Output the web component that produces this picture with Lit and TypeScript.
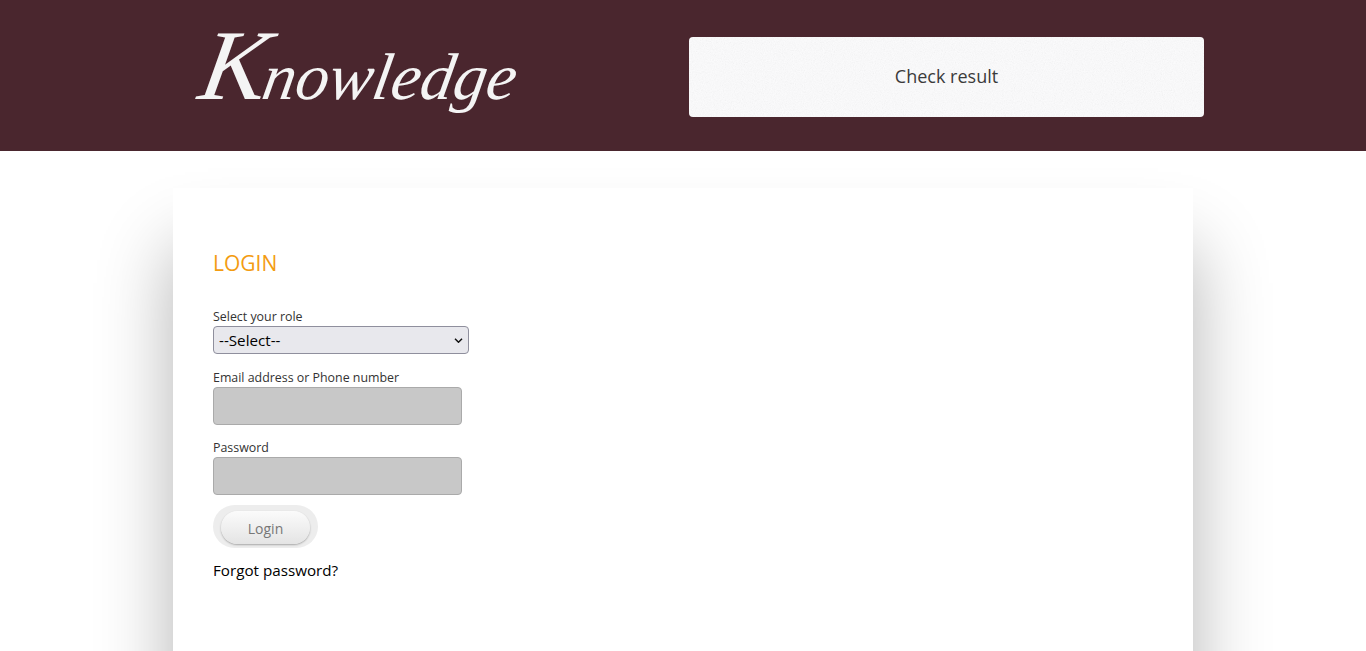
import { LitElement, html, css } from "lit";
import { customElement } from "lit/decorators.js";

@customElement("app-root")
export class AppRoot extends LitElement {
  static styles = css`
    :host { display: block; height: 100vh; overflow: hidden; background: #fff; font-family: "Open Sans", "Noto Sans", sans-serif; color: #333; }
    * { box-sizing: border-box; }
    .top { height: 151px; background: #4a262e; display: flex; justify-content: center; }
    .top-in { width: 1020px; display: flex; align-items: flex-start; }
    .logo { flex: none; width: 516px; height: 124px; padding: 8px 0 0 17px; color: #f4f4f4; font-family: "Liberation Serif", serif; font-style: italic; font-size: 66px; line-height: 116px; white-space: nowrap; }
    .logo-in { display: inline-block; transform: skewX(-10deg); transform-origin: 0 100%; }
    .logo .cap { font-size: 100px; line-height: 116px; margin-right: -3px; }
    .check { flex: none; position: relative; overflow: hidden; width: 515px; height: 80px; margin-top: 37px; background: #fcfcfd; border-radius: 4px; display: flex; align-items: center; justify-content: center; font-size: 18px; color: #3b3b3b; padding-bottom: 3px; }
    .noise { position: absolute; inset: 0; width: 100%; height: 100%; opacity: .13; }
    .check span { position: relative; }
    .card { width: 1020px; height: 600px; margin: 37px auto 0; background: #fff; box-shadow: 0 60px 70px rgba(0,0,0,.3); padding: 59px 40px 0; display: flex; flex-direction: column; align-items: flex-start; }
    h1 { margin: 0 0 28px; font-size: 21px; line-height: 33px; font-weight: 400; color: #f39c12; }
    label { display: block; font-size: 12.4px; line-height: 18px; color: #333; }
    .group { margin-bottom: 14px; }
    .group.role { margin-bottom: 15px; }
    .group.last { margin-bottom: 10px; }
    .sel { position: relative; width: 256px; height: 28px; }
    select { display: block; appearance: none; width: 100%; height: 100%; font: 15.2px "Open Sans", sans-serif; color: #000; background-color: #e8e8ed; border: 1px solid #8f8f9d; border-radius: 4px; padding: 0 5px; }
    .chev { position: absolute; right: 6px; top: 12px; width: 9px; height: 5px; pointer-events: none; }
    input { display: block; width: 249px; height: 38px; background: #c8c8c8; border: 1px solid #aaa; border-radius: 4px; }
    .btn-wrap { padding: 6px 8px 4px; height: 43px; width: 105px; background: #ededed; border-radius: 22px; }
    button { display: block; width: 89px; height: 33px; padding: 1px 0 0; border: 0; border-radius: 17px; background: linear-gradient(#fbfbfb, #e4e4e4); box-shadow: 0 1px 2px rgba(0,0,0,.3); font: 14px "Open Sans", sans-serif; color: #777; }
    a { margin-top: 12px; font-size: 15.2px; line-height: 20px; color: #000; text-decoration: none; }
  `;

  render() {
    return html`
      <header class="top">
        <div class="top-in">
          <div class="logo"><span class="logo-in"><span class="cap">K</span>nowledge</span></div>
          <div class="check">
            <svg class="noise" aria-hidden="true">
              <filter id="grain"><feTurbulence type="fractalNoise" baseFrequency="0.9" numOctaves="2" /><feColorMatrix type="saturate" values="0" /></filter>
              <rect width="100%" height="100%" filter="url(#grain)" />
            </svg>
            <span>Check result</span>
          </div>
        </div>
      </header>
      <main class="card">
        <h1>LOGIN</h1>
        <div class="group role">
          <label>Select your role</label>
          <div class="sel">
            <select><option>--Select--</option></select>
            <svg class="chev" viewBox="0 0 9 5" aria-hidden="true"><path d="M1 .8 4.5 4.2 8 .8" fill="none" stroke="#111" stroke-width="1.5" /></svg>
          </div>
        </div>
        <div class="group">
          <label>Email address or Phone number</label>
          <input type="text" />
        </div>
        <div class="group last">
          <label>Password</label>
          <input type="password" />
        </div>
        <div class="btn-wrap"><button>Login</button></div>
        <a href="#">Forgot password?</a>
      </main>
    `;
  }
}
